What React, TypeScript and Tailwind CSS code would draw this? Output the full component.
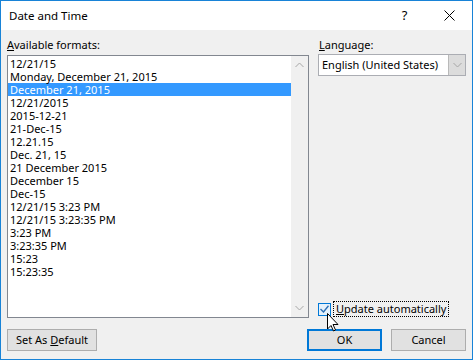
import React from "react";

const formats = [
  "12/21/15",
  "Monday, December 21, 2015",
  "December 21, 2015",
  "12/21/2015",
  "2015-12-21",
  "21-Dec-15",
  "12.21.15",
  "Dec. 21, 15",
  "21 December 2015",
  "December 15",
  "Dec-15",
  "12/21/15 3:23 PM",
  "12/21/15 3:23:35 PM",
  "3:23 PM",
  "3:23:35 PM",
  "15:23",
  "15:23:35",
];

const selected = 2;

function Chevron({ down }: { down?: boolean }) {
  return (
    <svg width="9" height="6" viewBox="0 0 9 6" fill="none">
      <path
        d={down ? "M0.5 1 L4.5 5 L8.5 1" : "M0.5 5 L4.5 1 L8.5 5"}
        stroke="#a6a6a6"
        strokeWidth="1"
      />
    </svg>
  );
}

export default function App() {
  return (
    <div
      className="relative w-[473px] h-[360px] border border-[#1883d7] flex flex-col text-[11px] text-black overflow-hidden"
      style={{ fontFamily: '"Noto Sans", "Liberation Sans", sans-serif' }}
    >
      {/* Title bar */}
      <div className="h-[29px] bg-white flex items-center">
        <div className="flex-1 pl-[8px] text-[11.5px] leading-none">Date and Time</div>
        <div className="w-[46px] h-full flex items-center justify-center text-[13px] pl-[3px]">?</div>
        <div className="w-[46px] h-full flex items-center justify-center">
          <svg width="11" height="11" viewBox="0 0 11 11">
            <path d="M0.5 0.5 L10.5 10.5 M10.5 0.5 L0.5 10.5" stroke="#000" strokeWidth="1" />
          </svg>
        </div>
      </div>

      {/* Body */}
      <div className="flex-1 bg-[#f0f0f0] px-[6px] pt-[8px] flex flex-col">
        <div className="flex gap-[9px]">
          {/* Left column */}
          <div className="w-[302px] flex flex-col">
            <div className="h-[14px] leading-[14px]">
              <u>A</u>vailable formats:
            </div>
            <div className="mt-[3px] h-[263px] bg-white border border-[#828790] flex">
              <div className="flex-1 pt-[1px]">
                {formats.map((f, i) => (
                  <div
                    key={f}
                    className={
                      "h-[13px] leading-[13px] pl-[2px] whitespace-nowrap " +
                      (i === selected ? "bg-[#3399ff] text-white" : "")
                    }
                  >
                    {f}
                  </div>
                ))}
              </div>
              <div className="w-[17px] bg-[#f0f0f0] flex flex-col items-center justify-between py-[6px]">
                <Chevron />
                <Chevron down />
              </div>
            </div>
          </div>

          {/* Right column */}
          <div className="w-[148px] flex flex-col">
            <div className="h-[14px] leading-[14px] pl-[1px]">
              <u>L</u>anguage:
            </div>
            <div className="mt-[2px] h-[22px] bg-white border border-[#abadb3] flex items-center">
              <div className="flex-1 pl-[3px] whitespace-nowrap">English (United States)</div>
              <div className="w-[17px] h-full bg-[#dcdcdc] border-l border-[#b9b9b9] flex items-center justify-center">
                <Chevron down />
              </div>
            </div>
            <div className="flex-1" />
            <div className="flex items-center h-[16px] mb-[1px]">
              <div className="w-[13px] h-[13px] bg-[#e5f1fb] border border-[#0078d7] flex items-center justify-center">
                <svg width="9" height="8" viewBox="0 0 9 8" fill="none">
                  <path d="M0.5 4 L3.5 7 L8.5 0.8" stroke="#2c6fb5" strokeWidth="1.4" />
                </svg>
              </div>
              <div className="ml-[2px] h-[16px] leading-[14px] px-[2px] border border-dotted border-black whitespace-nowrap">
                <u>U</u>pdate automatically
              </div>
            </div>
          </div>
        </div>

        {/* Buttons */}
        <div className="mt-[11px] flex items-center">
          <div className="w-[90px] h-[22px] bg-[#e1e1e1] border border-[#adadad] flex items-center justify-center whitespace-nowrap">
            Set As <u className="ml-[3px]">D</u>efault
          </div>
          <div className="flex-1" />
          <div className="w-[75px] h-[22px] bg-[#e1e1e1] border-2 border-[#0078d7] flex items-center justify-center">
            OK
          </div>
          <div className="ml-[9px] w-[75px] h-[22px] bg-[#e1e1e1] border border-[#adadad] flex items-center justify-center">
            Cancel
          </div>
        </div>
      </div>

      {/* Mouse cursor */}
      <svg
        className="absolute left-[326px] top-[312px]"
        width="12"
        height="19"
        viewBox="0 0 12 19"
      >
        <path
          d="M0.5 0.5 L0.5 16 L4 12.5 L6.5 18 L8.5 17 L6 11.5 L11 11.5 Z"
          fill="#fff"
          stroke="#000"
          strokeWidth="1"
        />
      </svg>
    </div>
  );
}
